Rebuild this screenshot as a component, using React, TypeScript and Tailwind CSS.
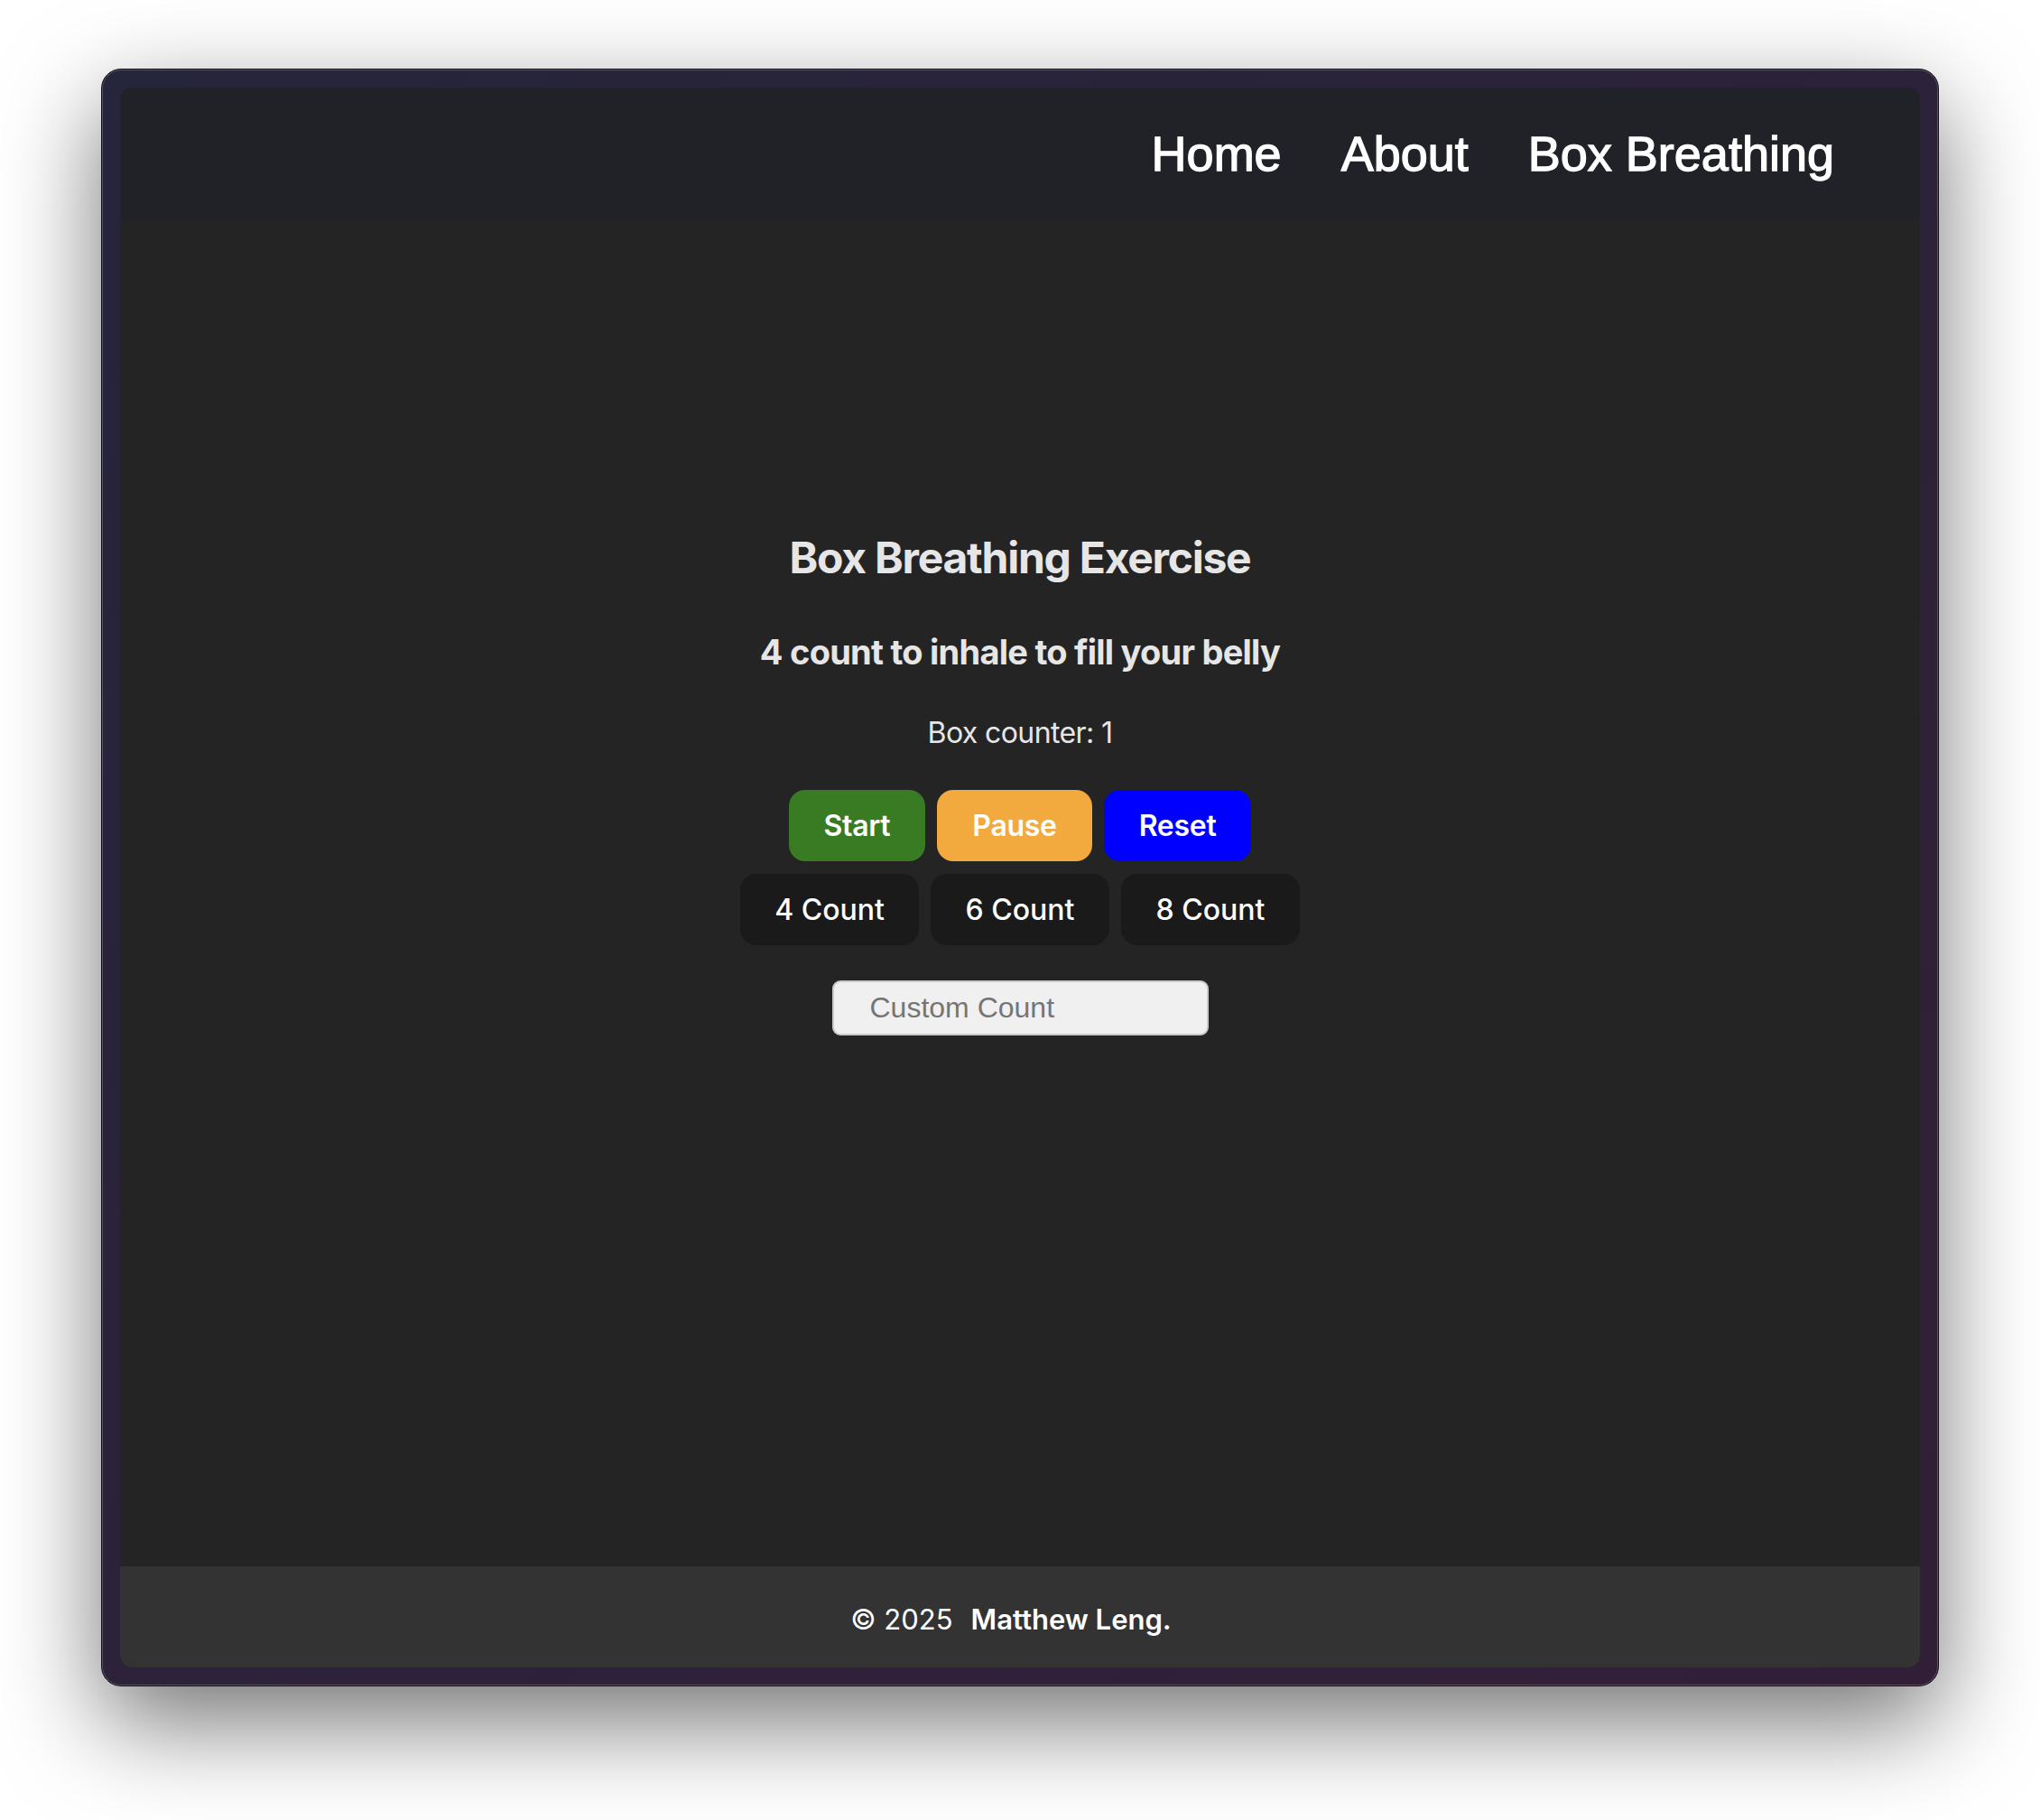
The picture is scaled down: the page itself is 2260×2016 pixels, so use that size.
import { useState } from 'react';

const NAV = ['Home', 'About', 'Box Breathing'];
const COUNTS = [4, 6, 8];

export default function App() {
  const [count, setCount] = useState(4);
  const [boxes] = useState(1);
  const [custom, setCustom] = useState('');

  return (
    <div className="min-h-[2016px] bg-white pt-[76px]" style={{ fontFamily: 'Inter, "Noto Sans", sans-serif' }}>
      {/* window frame */}
      <div className="mx-auto h-[1792px] w-[2036px] rounded-[22px] border border-[#0d0d12] bg-gradient-to-br from-[#25253b] to-[#321f37] p-[20px] shadow-[0_40px_110px_rgba(0,0,0,0.55),inset_0_0_0_1px_rgba(255,255,255,0.22)]">
        <div className="flex h-full flex-col overflow-hidden rounded-[14px] bg-[#242424]">
          {/* header */}
          <header className="flex h-[146px] shrink-0 items-center justify-end gap-[66px] bg-[#212227] pr-[95px]">
            {NAV.map((item) => (
              <a
                key={item}
                href="#"
                className="text-[54px] leading-none text-white [-webkit-text-stroke:1.3px_#ffffff]"
                style={{ fontFamily: '"Liberation Sans", Arial, sans-serif' }}
              >
                {item}
              </a>
            ))}
          </header>

          {/* main */}
          <main className="flex flex-1 flex-col items-center pt-[346px]">
            <h2 className="text-[48px] font-bold leading-[58px] tracking-[-1.25px] text-[#e6e6e6]">Box Breathing Exercise</h2>
            <h3 className="mt-[52px] text-[38px] font-bold leading-[46px] tracking-[-0.75px] text-[#e6e6e6]">
              {count} count to inhale to fill your belly
            </h3>
            <p className="mt-[47px] text-[32px] leading-[39px] tracking-[-0.6px] text-[#e6e6e6]">Box counter: {boxes}</p>

            <div className="mt-[44px] flex gap-[13px]">
              <button className="h-[79px] rounded-[18px] bg-[#387b22] px-[39px] text-[32px] font-semibold tracking-[-0.3px] text-white">Start</button>
              <button className="h-[79px] rounded-[18px] bg-[#f2a93e] px-[39px] text-[32px] font-semibold tracking-[-0.3px] text-white">Pause</button>
              <button className="h-[79px] rounded-[18px] bg-[#0000ff] px-[39px] text-[32px] font-semibold tracking-[-0.3px] text-white">Reset</button>
            </div>

            <div className="mt-[14px] flex gap-[13px]">
              {COUNTS.map((c) => (
                <button
                  key={c}
                  onClick={() => setCount(c)}
                  className="h-[79px] w-[198px] rounded-[18px] bg-[#1a1a1a] text-[32px] font-medium text-white"
                >
                  {c} Count
                </button>
              ))}
            </div>

            <input
              type="text"
              value={custom}
              onChange={(e) => setCustom(e.target.value)}
              placeholder="Custom Count"
              className="mt-[39px] h-[61px] w-[417px] rounded-[9px] border-2 border-[#c9c9c9] bg-[#f0f0f0] pl-[40px] text-[32px] text-[#222] outline-none placeholder:text-[#757575]"
              style={{ fontFamily: '"Liberation Sans", Arial, sans-serif' }}
            />
          </main>

          {/* footer */}
          <footer className="flex h-[112px] shrink-0 items-center justify-center bg-[#333333] pt-[6px] pr-[20px] text-[31px] text-white">
            <span>© 2025</span>
            <span className="ml-[20px] font-semibold">Matthew Leng.</span>
          </footer>
        </div>
      </div>
    </div>
  );
}
